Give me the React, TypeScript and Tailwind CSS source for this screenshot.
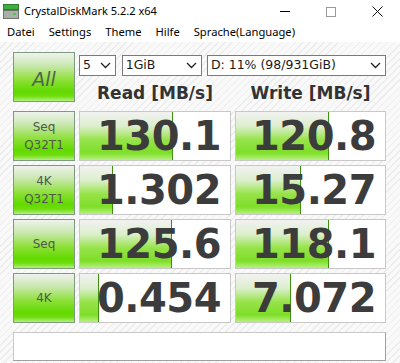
import React from "react";

const rows = [
  { label: ["Seq", "Q32T1"], read: "130.1", readW: 93, write: "120.8", writeW: 93 },
  { label: ["4K", "Q32T1"], read: "1.302", readW: 33, write: "15.27", writeW: 65 },
  { label: ["Seq"], read: "125.6", readW: 92, write: "118.1", writeW: 93 },
  { label: ["4K"], read: "0.454", readW: 19, write: "7.072", writeW: 55 },
];

function GreenButton({ children, className = "" }: { children: React.ReactNode; className?: string }) {
  return (
    <div
      className={
        "flex h-[50px] flex-col items-center justify-center border border-[#7f9a80] bg-[linear-gradient(to_bottom,#eef3ec_0%,#cbe8b4_25%,#8fe03a_55%,#62da00_80%,#70dd10_90%,#b4f080_100%)] text-[#4d5a4d] " +
        className
      }
    >
      {children}
    </div>
  );
}

function ValueBox({ value, barW }: { value: string; barW: number }) {
  return (
    <div className="relative h-[50px] overflow-hidden border border-[#c8c8c8] bg-white">
      <div
        className="absolute left-0 top-0 h-full border-r border-[#3f8f10] bg-[linear-gradient(to_bottom,#f2f2f2_0%,#dcefcc_30%,#97e34a_58%,#7ede28_85%,#b6f27e_100%)]"
        style={{ width: barW }}
      />
      <div className="relative flex h-full items-center justify-end pr-[9px] font-['DejaVu_Sans',sans-serif] text-[40px] font-bold leading-none tracking-[-0.5px] text-[#3c3c3c]">
        {value}
      </div>
    </div>
  );
}

function Combo({ text, className = "" }: { text: string; className?: string }) {
  return (
    <div
      className={
        "flex h-[21px] items-center justify-between border border-[#7a7a7a] bg-white pl-[3px] pr-[4px] font-['DejaVu_Sans',sans-serif] text-[12.5px] text-[#1a1a1a] " +
        className
      }
    >
      <span>{text}</span>
      <svg width="11" height="7" viewBox="0 0 11 7" className="shrink-0">
        <path d="M1 1 L5.5 5.5 L10 1" fill="none" stroke="#222" strokeWidth="1.3" />
      </svg>
    </div>
  );
}

export default function App() {
  return (
    <div className="h-[363px] w-[400px] overflow-hidden bg-white font-['Noto_Sans',sans-serif]">
      {/* title bar */}
      <div className="flex h-[23px] items-center">
        <svg width="16" height="15" viewBox="0 0 16 15" className="ml-[3px] mr-[5px]">
          <rect x="0.5" y="0.5" width="15" height="5" fill="#3fae3f" stroke="#2d7d2d" />
          <rect x="0.5" y="6.5" width="15" height="8" fill="#a8b0a8" stroke="#6d756d" />
          <rect x="10" y="9" width="3" height="2" fill="#40d040" />
        </svg>
        <span className="text-[11px] text-black">CrystalDiskMark 5.2.2 x64</span>
        <div className="ml-auto flex items-center">
          <div className="flex w-[46px] justify-center">
            <div className="h-px w-[10px] bg-black" />
          </div>
          <div className="flex w-[46px] justify-center">
            <div className="h-[10px] w-[10px] border border-[#9a9a9a]" />
          </div>
          <div className="flex w-[46px] justify-center">
            <svg width="11" height="11" viewBox="0 0 11 11">
              <path d="M0.5 0.5 L10.5 10.5 M10.5 0.5 L0.5 10.5" stroke="#111" strokeWidth="1" />
            </svg>
          </div>
        </div>
      </div>

      {/* menu */}
      <div className="flex h-[19px] items-center gap-[14px] pl-[7px] text-[11.2px] text-black">
        <span>Datei</span>
        <span>Settings</span>
        <span>Theme</span>
        <span>Hilfe</span>
        <span>Sprache(Language)</span>
      </div>

      {/* content */}
      <div className="h-[321px] bg-[repeating-linear-gradient(135deg,#f9f9f9_0px,#f9f9f9_4px,#ececec_4px,#ececec_5px)] pl-[13px] pt-[10px]">
        <div className="grid w-[373px] grid-cols-[62px_152px_151px] gap-x-[4px] gap-y-[4px]">
          <GreenButton>
            <span className="mt-[4px] font-['DejaVu_Sans',sans-serif] text-[19px] italic text-[#536353]">All</span>
          </GreenButton>
          <div className="col-span-2 flex flex-col">
            <div className="mt-[3px] flex gap-[5px]">
              <Combo text="5" className="mr-px w-[37px]" />
              <Combo text="1GiB" className="w-[81px]" />
              <Combo text="D: 11% (98/931GiB)" className="w-[181px]" />
            </div>
            <div className="mt-[5px] grid grid-cols-[152px_151px] gap-x-[4px] font-['DejaVu_Sans',sans-serif] text-[17px] font-bold text-[#333333]">
              <div className="text-center">Read [MB/s]</div>
              <div className="text-center">Write [MB/s]</div>
            </div>
          </div>

          {rows.map((r) => (
            <React.Fragment key={r.read}>
              <GreenButton className="font-['DejaVu_Sans',sans-serif] text-[12px] leading-[18px]">
                {r.label.map((l) => (
                  <span key={l}>{l}</span>
                ))}
              </GreenButton>
              <ValueBox value={r.read} barW={r.readW} />
              <ValueBox value={r.write} barW={r.writeW} />
            </React.Fragment>
          ))}
        </div>
        <div className="mt-[9px] h-[29px] w-[373px] border border-[#c8c8c8] border-b-[#a0a0a0] border-r-[#a0a0a0] bg-white" />
      </div>
    </div>
  );
}
